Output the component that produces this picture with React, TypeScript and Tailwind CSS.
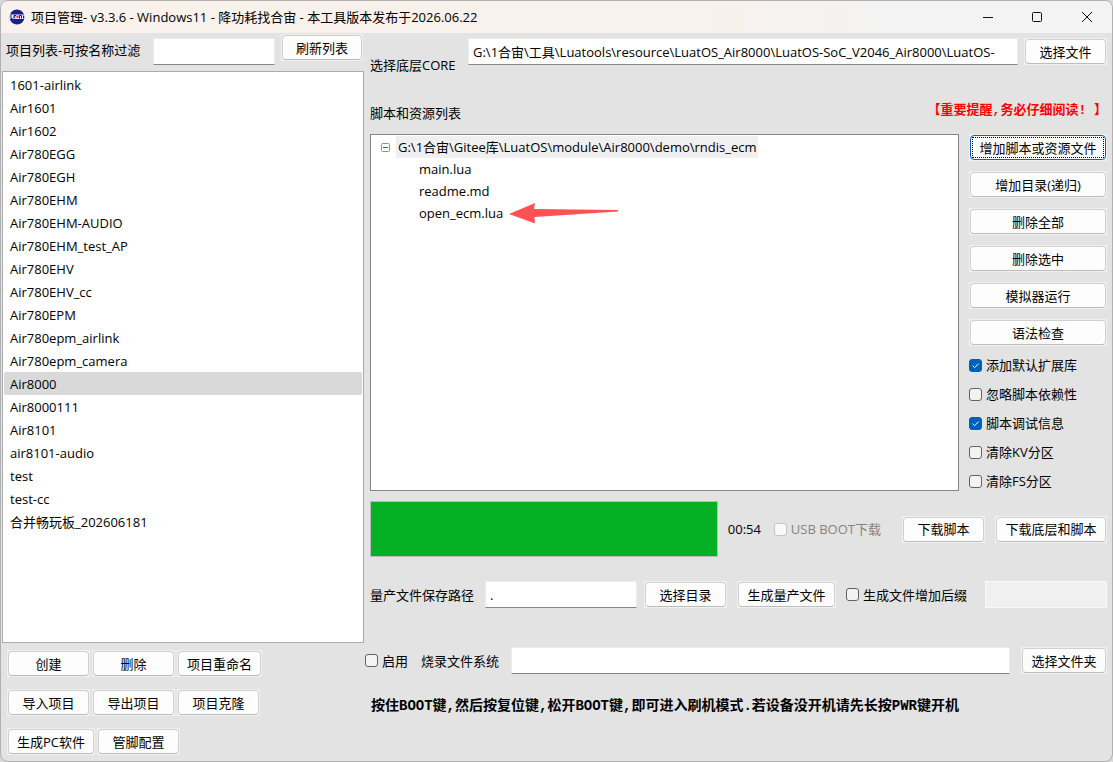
import React, { useState } from 'react';
import { clsx } from 'clsx';

const projects = [
  '1601-airlink',
  'Air1601',
  'Air1602',
  'Air780EGG',
  'Air780EGH',
  'Air780EHM',
  'Air780EHM-AUDIO',
  'Air780EHM_test_AP',
  'Air780EHV',
  'Air780EHV_cc',
  'Air780EPM',
  'Air780epm_airlink',
  'Air780epm_camera',
  'Air8000',
  'Air8000111',
  'Air8101',
  'air8101-audio',
  'test',
  'test-cc',
  '合并畅玩板_202606181',
];

const projectActions = [
  ['创建', '删除', '项目重命名'],
  ['导入项目', '导出项目', '项目克隆'],
  ['生成PC软件', '管脚配置'],
];

const scriptActions = ['增加脚本或资源文件', '增加目录(递归)', '删除全部', '删除选中', '模拟器运行', '语法检查'];

const options = [
  { label: '添加默认扩展库', checked: true },
  { label: '忽略脚本依赖性', checked: false },
  { label: '脚本调试信息', checked: true },
  { label: '清除KV分区', checked: false },
  { label: '清除FS分区', checked: false },
];

const files = ['main.lua', 'readme.md', 'open_ecm.lua'];

interface ButtonProps {
  children: React.ReactNode;
  className?: string;
  focused?: boolean;
}

const Button: React.FC<ButtonProps> = ({ children, className, focused }) => (
  <span className={clsx('flex h-[27px] shrink-0 bg-[#f0f0f0] p-px', className)}>
    <button
      type="button"
      className={clsx(
        'flex flex-1 rounded border bg-[#fdfdfd] p-px whitespace-nowrap',
        focused ? 'border-[#0067c0]' : 'border-[#d0d0d0] border-b-[#bcbcbc]'
      )}
    >
      <span
        className={clsx(
          'flex h-full flex-1 items-center justify-center border border-dotted px-[6px]',
          focused ? 'border-black' : 'border-transparent'
        )}
      >
        {children}
      </span>
    </button>
  </span>
);

interface CheckProps {
  label: string;
  checked?: boolean;
  disabled?: boolean;
}

const Check: React.FC<CheckProps> = ({ label, checked, disabled }) => (
  <label className={clsx('flex shrink-0 items-center gap-1 whitespace-nowrap', disabled && 'text-[#838383]')}>
    <span className="grid">
      <input
        type="checkbox"
        defaultChecked={checked}
        disabled={disabled}
        className="peer col-start-1 row-start-1 size-[13px] appearance-none rounded-[3px] border border-[#626262] bg-[#f3f3f3] checked:border-[#005fb8] checked:bg-[#005fb8] disabled:border-[#c5c5c5] disabled:bg-[#f9f9f9]"
      />
      <svg
        viewBox="0 0 13 13"
        className="pointer-events-none invisible col-start-1 row-start-1 size-[13px] peer-checked:visible"
        fill="none"
        stroke="#fff"
      >
        <path d="M3.5 6.6 5.6 8.7 9.7 4.6" />
      </svg>
    </span>
    {label}
  </label>
);

const field = 'h-[27px] min-w-0 border border-[#ececec] border-b-[#868686] bg-white px-1 outline-none';

const Logo = () => (
  <svg viewBox="0 0 16 16" className="size-4">
    <circle cx="8" cy="8" r="7.5" fill="#1b1f8a" />
    <path d="M.5 5.5h15v4.500H.5z" fill="#e9ebf8" />
    <path d="M2 6v3.500h1.500M5 9.500V6.500h2M5 8h1.500M10.500 9.500v-3h2v3M14.500 6.500v3" fill="none" stroke="#1b1f8a" />
    <path d="M7.500 6.500H9.500v2.500H7.500z" fill="#e23a3a" />
  </svg>
);

const TitleBar = () => (
  <header className="flex h-8 shrink-0 items-center bg-linear-to-r from-[#f9f1ec] from-60% to-[#f3f3f3] to-80% pb-px pl-2">
    <Logo />
    <h1 className="flex-1 truncate pl-[6px]">项目管理- v3.3.6 - Windows11 - 降功耗找合宙 - 本工具版本发布于2026.06.22</h1>
    <div className="flex h-full">
      <button type="button" aria-label="最小化" className="flex w-[49px] items-center justify-center">
        <svg viewBox="0 0 10 10" className="size-[10px]" stroke="#111"><path d="M0 5.5h10" /></svg>
      </button>
      <button type="button" aria-label="最大化" className="flex w-[49px] items-center justify-center">
        <svg viewBox="0 0 10 10" className="size-[10px]" fill="none" stroke="#111"><rect x=".5" y=".5" width="9" height="9" rx="1" /></svg>
      </button>
      <button type="button" aria-label="关闭" className="flex w-[51px] items-center justify-center">
        <svg viewBox="0 0 10 10" className="size-[10px]" stroke="#111"><path d="m0 0 10 10M10 0 0 10" /></svg>
      </button>
    </div>
  </header>
);

const Sidebar = () => {
  const [selected, setSelected] = useState('Air8000');

  return (
    <aside className="flex w-[363px] shrink-0 flex-col pl-px">
      <div className="flex h-[38px] items-start pt-px pl-1">
        <label htmlFor="filter" className="w-[147px] pt-[6px] leading-5 whitespace-nowrap">项目列表-可按名称过滤</label>
        <input id="filter" className={clsx(field, 'mt-1 w-[122px]')} />
        <Button className="ml-[6px] w-[82px]">刷新列表</Button>
      </div>
      <ul className="flex-1 border border-[#a9abb0] bg-white px-px pt-px">
        {projects.map((name) => (
          <li key={name}>
            <button
              type="button"
              onClick={() => setSelected(name)}
              className={clsx('block h-[23px] w-full rounded-[2px] px-[6px] text-left', name === selected && 'bg-[#d9d9d9]')}
            >
              {name}
            </button>
          </li>
        ))}
      </ul>
      <div className="flex flex-col gap-3 px-[5px] pt-[7px] pb-[6px]">
        {projectActions.map((row, i) => (
          <div key={i} className="flex gap-[2px]">
            {row.map((name) => (
              <Button key={name} className="min-w-[83px]">{name}</Button>
            ))}
          </div>
        ))}
      </div>
    </aside>
  );
};

const FileTree = () => (
  <div className="flex-1 border border-[#828790] bg-white pt-px pl-[10px]">
    <div className="flex items-center gap-[6px]">
      <svg viewBox="0 0 9 9" className="size-[9px]">
        <rect x=".5" y=".5" width="8" height="8" rx="1" fill="#fafafa" stroke="#919191" />
        <path d="M2 4.5h5" stroke="#3a5fb0" />
      </svg>
      <span className="h-[22px] bg-[#f0f0f0] px-[2px] leading-[22px]">G:\1合宙\Gitee库\LuatOS\module\Air8000\demo\rndis_ecm</span>
    </div>
    <ul className="pl-[38px] leading-[22px]">
      {files.map((name) => (
        <li key={name} className="flex items-center gap-[6px]">
          {name}
          {name === 'open_ecm.lua' && (
            <svg viewBox="0 0 110 21" className="h-[21px] w-[110px]" fill="#ff5353">
              <path d="M0 11 26 0 25 6 109 7v1.500L25.500 14 26 20.500Z" />
            </svg>
          )}
        </li>
      ))}
    </ul>
  </div>
);

const Workspace = () => (
  <main className="flex min-w-0 flex-1 flex-col pr-[5px]">
    <div className="flex h-[66px] items-start pt-[5px] pl-[6px]">
      <label htmlFor="core" className="w-[98px] pt-[17px] leading-5 whitespace-nowrap">选择底层CORE</label>
      <input
        id="core"
        className={clsx(field, 'flex-1')}
        defaultValue="G:\1合宙\工具\Luatools\resource\LuatOS_Air8000\LuatOS-SoC_V2046_Air8000\LuatOS-"
      />
      <Button className="ml-[6px] w-[83px]">选择文件</Button>
    </div>

    <div className="flex h-[35px] justify-between pt-1 pl-[6px]">
      <h2 className="leading-5">脚本和资源列表</h2>
      <strong className="font-['Liberation_Mono','Noto_Sans_CJK_SC',monospace] text-[13px] leading-4 text-[#f00]">
        【重要提醒,务必仔细阅读! 】
      </strong>
    </div>

    <section className="flex flex-1 gap-[10px] pl-[6px]">
      <FileTree />
      <div className="flex w-[138px] flex-col">
        <div className="flex flex-col gap-[10px]">
          {scriptActions.map((name, i) => (
            <Button key={name} focused={i === 0}>{name}</Button>
          ))}
        </div>
        <div className="flex flex-col gap-[9px] pt-[9px]">
          {options.map((option) => (
            <Check key={option.label} {...option} />
          ))}
        </div>
      </div>
    </section>

    <section className="flex items-center pt-[10px] pl-[6px]">
      <div
        role="progressbar"
        aria-label="下载进度"
        aria-valuenow={100}
        className="h-14 min-w-0 flex-1 border border-[#bcbcbc] bg-[#06b025]"
      />
      <span className="w-[56px] pl-[10px]">00:54</span>
      <Check label="USB BOOT下载" disabled />
      <Button className="ml-[21px] w-[83px]">下载脚本</Button>
      <Button className="ml-[10px] w-[112px]">下载底层和脚本</Button>
    </section>

    <section className="flex items-center pt-6 pl-[6px]">
      <label htmlFor="output" className="w-[115px] whitespace-nowrap">量产文件保存路径</label>
      <input id="output" className={clsx(field, 'flex-1')} defaultValue="." />
      <Button className="mx-[7px] w-[83px]">选择目录</Button>
      <Button className="mx-[3px] w-[99px]">生成量产文件</Button>
      <span className="pl-[7px]"><Check label="生成文件增加后缀" /></span>
      <input aria-label="后缀" disabled className="ml-[18px] h-[27px] w-[122px] border border-[#f9f9f9] bg-[#f0f0f0] px-1" />
    </section>

    <section className="flex items-center pt-[39px] pl-px">
      <Check label="启用" />
      <label htmlFor="fs" className="w-[103px] pl-[13px] whitespace-nowrap">烧录文件系统</label>
      <input id="fs" className={clsx(field, 'flex-1')} />
      <Button className="ml-[11px] w-[86px]">选择文件夹</Button>
    </section>

    <p className="h-[87px] pt-[22px] pl-[7px] font-['Liberation_Mono','Noto_Sans_CJK_SC',monospace] text-sm font-bold whitespace-nowrap">
      按住BOOT键,然后按复位键,松开BOOT键,即可进入刷机模式.若设备没开机请先长按PWR键开机
    </p>
  </main>
);

const App: React.FC = () => (
  <div className="min-h-screen bg-[#d9d9d9]">
    <div className="flex min-h-screen flex-col overflow-hidden rounded-lg border border-[#b0b0b0] bg-[#e3e3e3] font-['Open_Sans','Noto_Sans_CJK_SC',sans-serif] text-[13px] leading-5 text-black">
      <TitleBar />
      <div className="flex flex-1">
        <Sidebar />
        <Workspace />
      </div>
    </div>
  </div>
);

export default App;
